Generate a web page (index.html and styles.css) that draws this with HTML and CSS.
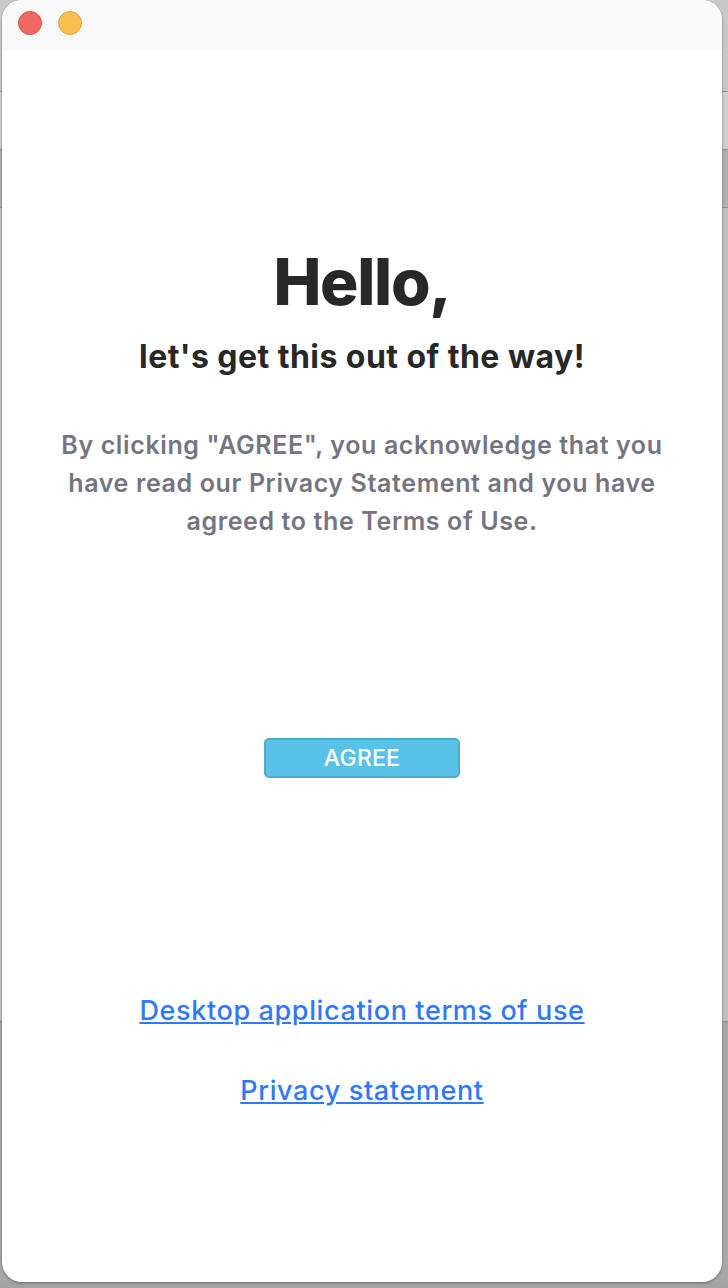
FILE: index.html
```html
<!DOCTYPE html>
<html lang="en">
<head>
<meta charset="utf-8">
<title>Terms</title>
<link rel="stylesheet" href="styles.css">
</head>
<body>
<div class="backdrop">
  <div class="band band-a"></div>
  <div class="band band-b"></div>
  <div class="band band-c"></div>
  <div class="band band-d"></div>
  <div class="band band-e"></div>
</div>
<main class="window">
  <header class="titlebar">
    <span class="light light-red"></span>
    <span class="light light-yellow"></span>
  </header>
  <section class="content">
    <h1 class="hello">Hello,</h1>
    <h2 class="sub">let's get this out of the way!</h2>
    <p class="notice">By clicking "AGREE", you acknowledge that you have read our Privacy Statement and you have agreed to the Terms of Use.</p>
    <button class="agree" type="button">AGREE</button>
    <nav class="links">
      <a href="#">Desktop application terms of use</a>
      <a href="#">Privacy statement</a>
    </nav>
  </section>
</main>
</body>
</html>
```
FILE: styles.css
```css
* { box-sizing: border-box; }
html, body { margin: 0; height: 100%; }
body {
  width: 728px;
  height: 1288px;
  overflow: hidden;
  position: relative;
  font-family: Inter, "Noto Sans", sans-serif;
  background: #a3a3a3;
}
.backdrop { display: flex; flex-direction: column; height: 1288px; }
.band { border-bottom: 1px solid #8f8f8f; }
.band-a { height: 92px; background: #c8c8c8; }
.band-b { height: 58px; background: #cfcfcf; }
.band-c { height: 58px; background: #b0b0b0; }
.band-d { height: 814px; background: #c0c0c0; }
.band-e { height: 260px; background: #a8a8a8; border-bottom: 0; }

.window {
  position: absolute;
  left: 2px;
  top: 0;
  width: 720px;
  height: 1282px;
  background: #fff;
  border-radius: 20px;
  overflow: hidden;
  display: flex;
  flex-direction: column;
  box-shadow: 0 1px 3px rgba(0, 0, 0, .35);
}
.titlebar {
  height: 50px;
  flex: none;
  background: #f8f8f8;
  display: flex;
  align-items: center;
  gap: 16px;
  padding: 0 0 5px 16px;
}
.light {
  width: 24px;
  height: 24px;
  border-radius: 50%;
  border: 1px solid;
}
.light-red { background: #f0685f; border-color: #d9534c; }
.light-yellow { background: #f7bf4f; border-color: #dda63f; }

.content {
  flex: 1;
  display: flex;
  flex-direction: column;
  align-items: center;
  text-align: center;
}
.hello {
  margin: 194px 0 0;
  font-size: 64px;
  line-height: 76px;
  font-weight: 800;
  letter-spacing: -1.3px;
  color: #282828;
}
.sub {
  margin: 19px 0 0;
  font-size: 32px;
  line-height: 36px;
  font-weight: 700;
  letter-spacing: 0.45px;
  color: #282828;
}
.notice {
  width: 640px;
  margin: 51px 0 0;
  font-size: 25px;
  line-height: 38px;
  font-weight: 600;
  letter-spacing: 0.62px;
  color: #747482;
}
.agree {
  width: 196px;
  height: 40px;
  margin: 198px 0 0;
  padding: 0;
  background: #58c2e8;
  border: 2px solid #4faccd;
  border-radius: 5px;
  color: #fff;
  font: 500 23px/1 Inter, sans-serif;
  letter-spacing: 0.2px;
}
.links {
  margin-top: 215px;
  display: flex;
  flex-direction: column;
  gap: 44px;
  align-items: center;
}
.links a {
  font-size: 27px;
  line-height: 36px;
  font-weight: 500;
  letter-spacing: 0.63px;
  color: #3079f5;
  text-decoration: underline;
}
```
